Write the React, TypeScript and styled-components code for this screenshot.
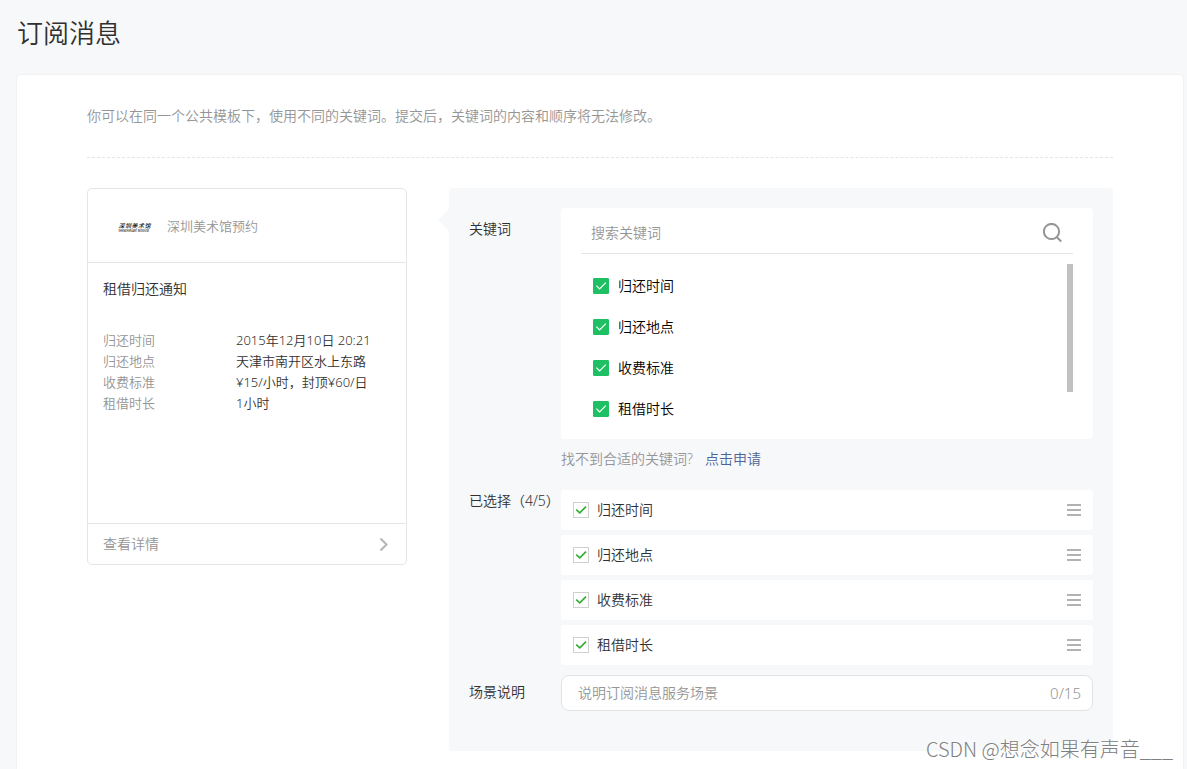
import React, { useState } from "react";
import styled, { createGlobalStyle, css } from "styled-components";

const colors = {
  page: "#f7f8fa",
  line: "#e4e5e8",
  text: "#303030",
  muted: "#959595",
  green: "#1fc064",
  link: "#4f6496",
};

const GlobalStyle = createGlobalStyle`
  *, *::before, *::after { box-sizing: border-box; }
  body {
    margin: 0;
    background: ${colors.page};
    color: ${colors.text};
    font-family: "Noto Sans", "Noto Sans CJK SC", sans-serif;
    font-size: 14px;
    font-weight: 350;
    line-height: 20px;
  }
  input, button { font: inherit; color: inherit; }
`;

const Page = styled.div`
  position: relative;
  display: flex;
  flex-direction: column;
  min-height: 100vh;
`;

const PageTitle = styled.h1`
  margin: 0;
  padding: 15px 17px 24px;
  font-size: 26px;
  font-weight: 350;
  line-height: 36px;
`;

const Sheet = styled.main`
  flex: 1;
  margin: 0 4px 0 17px;
  padding: 0 70px 18px;
  background: #fff;
  border-radius: 4px 4px 0 0;
  box-shadow: 0 0 2px rgba(0, 0, 0, 0.1);
`;

const Intro = styled.p`
  margin: 0 0 30px;
  padding: 31px 0;
  border-bottom: 1px dashed ${colors.line};
  color: ${colors.muted};
`;

const Columns = styled.div`
  display: flex;
  align-items: flex-start;
  gap: 42px;
`;

const PreviewCard = styled.section`
  flex: 0 0 320px;
  border: 1px solid ${colors.line};
  border-radius: 5px;
  background: #fff;
`;

const PreviewHeader = styled.header`
  display: flex;
  align-items: center;
  gap: 15px;
  padding: 27px 30px 25px;
  border-bottom: 1px solid ${colors.line};
  color: ${colors.muted};
  font-size: 13px;
  line-height: 21px;
`;

const PreviewBody = styled.div`
  min-height: 260px;
  padding: 16px 15px;
`;

const PreviewTitle = styled.h2`
  margin: 0 0 31px;
  font-size: 14px;
  font-weight: 350;
  line-height: 20px;
`;

const Facts = styled.dl`
  display: grid;
  grid-template-columns: 133px 1fr;
  margin: 0;
  font-size: 13px;
  line-height: 21px;
  dt { color: ${colors.muted}; }
  dd { margin: 0; }
`;

const DetailLink = styled.a`
  display: flex;
  align-items: center;
  justify-content: space-between;
  height: 41px;
  padding: 0 17px 0 15px;
  border-top: 1px solid ${colors.line};
  color: ${colors.muted};
  text-decoration: none;
`;

const Panel = styled.form`
  position: relative;
  flex: 1;
  display: grid;
  grid-template-columns: 92px 1fr;
  padding: 20px 20px 40px;
  border-radius: 4px;
  background: ${colors.page};
  &::before {
    content: "";
    position: absolute;
    top: 21px;
    left: -11px;
    border: 11px solid transparent;
    border-left: 0;
    border-right-color: ${colors.page};
  }
`;

const RowLabel = styled.div<{ $top?: number }>`
  padding-top: ${(p) => p.$top ?? 0}px;
  line-height: 22px;
  white-space: nowrap;
`;

const KeywordBox = styled.div`
  height: 231px;
  padding: 0 20px;
  border-radius: 4px;
  background: #fff;
`;

const SearchBar = styled.div`
  display: flex;
  align-items: center;
  height: 46px;
  padding: 4px 10px 0;
  border-bottom: 1px solid ${colors.line};
`;

const fieldReset = css`
  flex: 1;
  min-width: 0;
  padding: 0;
  border: 0;
  outline: 0;
  background: none;
  &::placeholder { color: ${colors.muted}; opacity: 1; }
`;

const SearchInput = styled.input`
  ${fieldReset}
`;

const IconButton = styled.button`
  display: flex;
  padding: 0;
  border: 0;
  background: none;
  cursor: pointer;
`;

const KeywordScroller = styled.div`
  display: flex;
  justify-content: space-between;
  align-items: flex-start;
  margin-top: 10px;
`;

const KeywordList = styled.ul`
  display: flex;
  flex-direction: column;
  gap: 25px;
  margin: 0;
  padding: 14px 12px;
  list-style: none;
  color: #000;
`;

const ScrollThumb = styled.div`
  width: 6px;
  height: 128px;
  background: #c1c1c1;
`;

const CheckLabel = styled.label<{ $gap: number }>`
  display: flex;
  align-items: center;
  gap: ${(p) => p.$gap}px;
  line-height: 16px;
  cursor: pointer;
`;

const CheckCell = styled.span`
  display: grid;
  width: 16px;
  height: 16px;
  > * { grid-area: 1 / 1; }
  svg { pointer-events: none; }
  input:not(:checked) + svg { visibility: hidden; }
`;

const CheckInput = styled.input<{ $solid: boolean }>`
  appearance: none;
  width: 16px;
  height: 16px;
  margin: 0;
  border: 1px solid #d0d0d0;
  background: #fff;
  ${(p) =>
    p.$solid &&
    css`
      border-radius: 1px;
      &:checked {
        border-color: ${colors.green};
        background: ${colors.green};
      }
    `}
`;

const Hint = styled.p`
  margin: 9px 0 21px;
  color: ${colors.muted};
  line-height: 21px;
  a {
    margin-left: 12px;
    color: ${colors.link};
    text-decoration: none;
  }
`;

const SelectedList = styled.ul`
  display: flex;
  flex-direction: column;
  gap: 5px;
  margin: 0 0 10px;
  padding: 0;
  list-style: none;
`;

const SelectedItem = styled.li`
  display: flex;
  align-items: center;
  justify-content: space-between;
  height: 40px;
  padding: 0 12px;
  border-radius: 3px;
  background: #fff;
`;

const SceneField = styled.div`
  display: flex;
  align-items: center;
  height: 36px;
  padding: 0 11px 0 16px;
  border: 1px solid #e1e3e5;
  border-radius: 8px;
  background: #fff;
`;

const SceneInput = styled.input`
  ${fieldReset}
`;

const Counter = styled.span`
  color: ${colors.muted};
  font-size: 15px;
`;

const Watermark = styled.div`
  position: absolute;
  right: 14px;
  bottom: 6px;
  color: #808080;
  font-family: "Noto Sans CJK SC", sans-serif;
  font-size: 20px;
  font-weight: 300;
  line-height: 28px;
  text-shadow: 1px 1px 0 #fff;
`;

const MuseumLogo = () => (
  <svg width="34" height="14" viewBox="0 0 68 28" aria-hidden="true">
    <g fill="#111">
      <text x="1 14 27 40 53" y="16" fontSize="12" fontWeight="500" fontStyle="italic">
        深圳美术馆
      </text>
      <text x="1" y="24" fontSize="5" fontWeight="500">SHENZHEN ART MUSEUM</text>
    </g>
  </svg>
);

const ChevronIcon = () => (
  <svg width="10" height="14" viewBox="0 0 10 14" fill="none" aria-hidden="true">
    <path d="M1.5 1.5 7.5 7.5 1.5 13.5" stroke="#b5b5b5" strokeWidth="2" />
  </svg>
);

const SearchIcon = () => (
  <svg width="20" height="20" viewBox="0 0 20 20" fill="none" stroke="#959595" strokeWidth="2">
    <circle cx="8.5" cy="8.5" r="7.6" />
    <path d="M13.7 14 18.2 18.5" />
  </svg>
);

const DragIcon = () => (
  <svg width="14" height="12" viewBox="0 0 14 12" fill="#b2b2b2" aria-hidden="true">
    <path d="M0 0h14v2H0zM0 5h14v2H0zM0 10h14v2H0z" />
  </svg>
);

function Check({
  label,
  solid = false,
  checked,
  onChange,
}: {
  label: string;
  solid?: boolean;
  checked: boolean;
  onChange: () => void;
}) {
  return (
    <CheckLabel $gap={solid ? 9 : 8}>
      <CheckCell>
        <CheckInput type="checkbox" $solid={solid} checked={checked} onChange={onChange} />
        <svg width="16" height="16" viewBox="0 0 16 16" fill="none" aria-hidden="true">
          {solid ? (
            <path d="M3.4 7.7 6.6 11 12.8 4.7" stroke="#fff" strokeWidth="1.1" />
          ) : (
            <path d="M3.2 7.6 6.8 10.8 13 4.6" stroke="#33ae35" strokeWidth="1.7" />
          )}
        </svg>
      </CheckCell>
      {label}
    </CheckLabel>
  );
}

const keywords = ["归还时间", "归还地点", "收费标准", "租借时长"];

const facts = [
  ["归还时间", "2015年12月10日 20:21"],
  ["归还地点", "天津市南开区水上东路"],
  ["收费标准", "¥15/小时，封顶¥60/日"],
  ["租借时长", "1小时"],
];

export default function App() {
  const [selected, setSelected] = useState(keywords);
  const [scene, setScene] = useState("");

  const toggle = (word: string) =>
    setSelected((list) =>
      list.includes(word) ? list.filter((w) => w !== word) : [...list, word]
    );

  return (
    <Page lang="zh-CN">
      <GlobalStyle />
      <PageTitle>订阅消息</PageTitle>
      <Sheet>
        <Intro>你可以在同一个公共模板下，使用不同的关键词。提交后，关键词的内容和顺序将无法修改。</Intro>
        <Columns>
          <PreviewCard>
            <PreviewHeader>
              <MuseumLogo />
              <span>深圳美术馆预约</span>
            </PreviewHeader>
            <PreviewBody>
              <PreviewTitle>租借归还通知</PreviewTitle>
              <Facts>
                {facts.map(([name, value]) => (
                  <React.Fragment key={name}>
                    <dt>{name}</dt>
                    <dd>{value}</dd>
                  </React.Fragment>
                ))}
              </Facts>
            </PreviewBody>
            <DetailLink href="#detail">
              查看详情
              <ChevronIcon />
            </DetailLink>
          </PreviewCard>

          <Panel onSubmit={(e) => e.preventDefault()}>
            <RowLabel as="label" htmlFor="search" $top={10}>关键词</RowLabel>
            <div>
              <KeywordBox>
                <SearchBar>
                  <SearchInput id="search" type="text" placeholder="搜索关键词" />
                  <IconButton type="button" aria-label="搜索">
                    <SearchIcon />
                  </IconButton>
                </SearchBar>
                <KeywordScroller>
                  <KeywordList>
                    {keywords.map((word) => (
                      <li key={word}>
                        <Check
                          solid
                          label={word}
                          checked={selected.includes(word)}
                          onChange={() => toggle(word)}
                        />
                      </li>
                    ))}
                  </KeywordList>
                  <ScrollThumb />
                </KeywordScroller>
              </KeywordBox>
              <Hint>
                找不到合适的关键词?<a href="#apply">点击申请</a>
              </Hint>
            </div>

            <RowLabel>已选择（{selected.length}/5）</RowLabel>
            <SelectedList>
              {selected.map((word) => (
                <SelectedItem key={word}>
                  <Check label={word} checked onChange={() => toggle(word)} />
                  <IconButton type="button" aria-label="拖动排序">
                    <DragIcon />
                  </IconButton>
                </SelectedItem>
              ))}
            </SelectedList>

            <RowLabel as="label" htmlFor="scene" $top={6}>场景说明</RowLabel>
            <SceneField>
              <SceneInput
                id="scene"
                type="text"
                maxLength={15}
                placeholder="说明订阅消息服务场景"
                value={scene}
                onChange={(e) => setScene(e.target.value)}
              />
              <Counter>{scene.length}/15</Counter>
            </SceneField>
          </Panel>
        </Columns>
      </Sheet>
      <Watermark>CSDN @想念如果有声音___</Watermark>
    </Page>
  );
}
